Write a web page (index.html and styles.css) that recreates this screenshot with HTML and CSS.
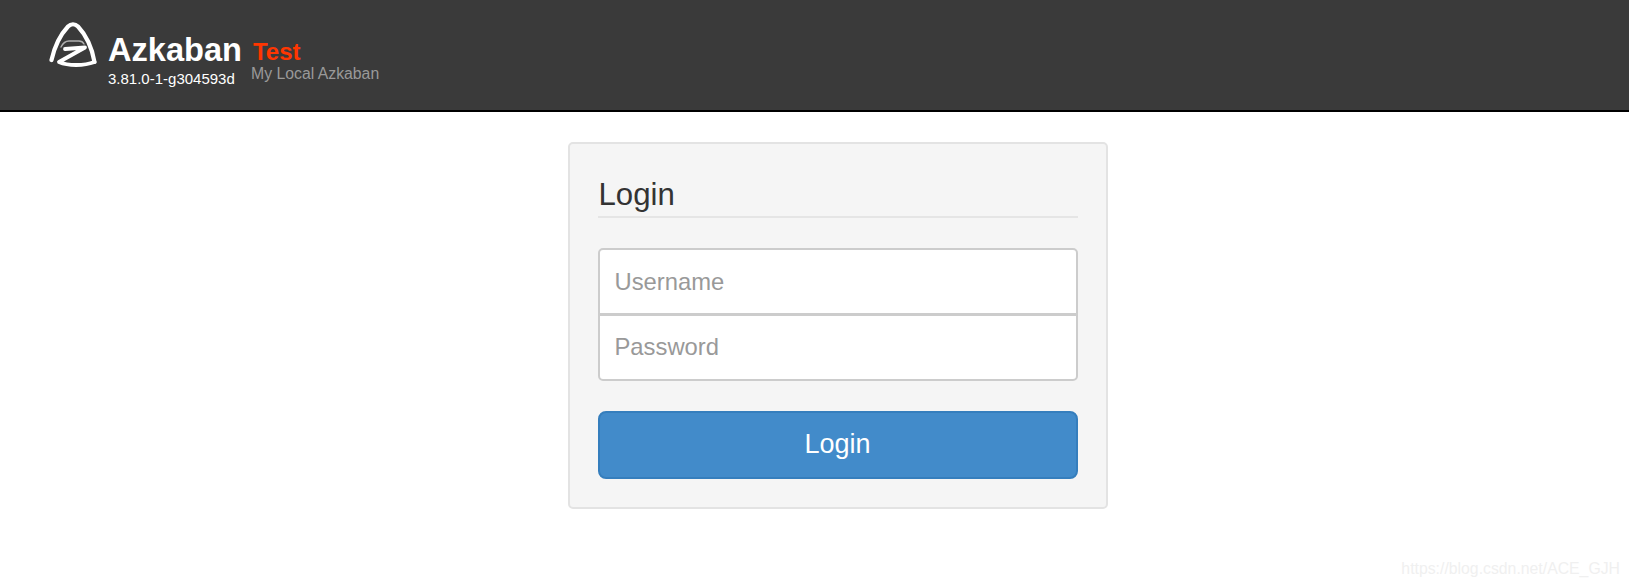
FILE: index.html
```html
<!DOCTYPE html>
<html lang="en">
<head>
<meta charset="utf-8">
<title>Azkaban Login</title>
<link rel="stylesheet" href="styles.css">
</head>
<body>
<header class="navbar">
  <svg class="logo" viewBox="0 0 50 48" width="50" height="48" aria-hidden="true">
    <g fill="none" stroke="#fff" stroke-linecap="round" stroke-linejoin="round">
      <path class="logo-outer" d="M3.5 40 C6 29 12 15 20 6.5 C23 3.5 27 3.5 30 6.5 C38 15 44 28 46.5 42"/>
      <path class="logo-in" d="M13 27 C15 23 17 21 21 21 L31 21 C33 21 35 22 36 24"/>
      <path class="logo-z" d="M17 29 L37 27.5 L11 42 C20 46 36 46 46.5 42"/>
    </g>
  </svg>
  <div class="brand">
    <div class="brand-name">Azkaban</div>
    <div class="brand-version">3.81.0-1-g304593d</div>
  </div>
  <div class="env">
    <div class="env-name">Test</div>
    <div class="env-desc">My Local Azkaban</div>
  </div>
</header>
<main class="content">
  <form class="panel">
    <h3 class="panel-title">Login</h3>
    <div class="fields">
      <input class="field field-top" type="text" placeholder="Username">
      <input class="field field-bottom" type="password" placeholder="Password">
    </div>
    <button class="submit" type="button">Login</button>
  </form>
</main>
<div class="watermark">https://blog.csdn.net/ACE_GJH</div>
</body>
</html>
```
FILE: styles.css
```css
* { box-sizing: border-box; }
html, body { margin: 0; height: 100%; }
body {
  position: relative;
  height: 587px;
  overflow: hidden;
  background: #fff;
  color: #333;
  font-family: "Liberation Sans", Arial, sans-serif;
}
.navbar {
  display: flex;
  align-items: flex-start;
  height: 112px;
  padding: 20px 0 0 48px;
  background: #3a3a3a;
  border-bottom: 2px solid #000;
}
.logo { flex: none; margin-right: 10px; filter: blur(0.5px); }
.logo-outer { stroke-width: 4.2; }
.logo-in { stroke-width: 1.4; opacity: 0.6; }
.logo-z { stroke-width: 3.8; }
.brand { margin-right: 9px; }
.brand-name {
  margin-top: 14px;
  color: #fff;
  font-size: 32.6px;
  line-height: 32px;
  font-weight: 700;
}
.brand-version {
  margin-top: 4px;
  color: #fff;
  font-size: 15px;
  line-height: 17px;
}
.env-name {
  margin: 20px 0 0 2px;
  color: #ff3601;
  font-size: 24px;
  line-height: 24px;
  font-weight: 700;
}
.env-desc {
  margin-top: 1px;
  color: #999;
  font-size: 15.8px;
  line-height: 18px;
}
.content {
  display: flex;
  justify-content: center;
  padding: 30px 0 0 46px;
}
.panel {
  width: 540px;
  height: 367px;
  padding: 28px 28px;
  background: #f5f5f5;
  border: 2px solid #e3e3e3;
  border-radius: 5px;
}
.panel-title {
  margin: 0 0 30px;
  padding: 3px 0 3px 1px;
  height: 46px;
  color: #333;
  font-size: 31.2px;
  line-height: 40px;
  font-weight: 400;
  border-bottom: 2px solid #e5e5e5;
}
.fields { display: flex; flex-direction: column; }
.field {
  display: block;
  width: 100%;
  padding: 0 15px;
  background: #fff;
  color: #555;
  border: 2px solid #ccc;
  font-family: inherit;
  font-size: 23.8px;
  outline: none;
}
.field::placeholder { color: #999; opacity: 1; }
.field-top { height: 67px; border-radius: 5px 5px 0 0; }
.field-bottom { margin-top: -1px; height: 67px; padding-bottom: 2px; border-radius: 0 0 5px 5px; }
.submit {
  display: block;
  width: 100%;
  height: 68px;
  margin-top: 30px;
  padding-bottom: 2px;
  background: #428bca;
  color: #fff;
  border: 2px solid #357ebd;
  border-radius: 8px;
  font-family: inherit;
  font-size: 27px;
}
.watermark {
  position: absolute;
  right: 9px;
  bottom: 8px;
  color: #f0f0f0;
  font-size: 15.8px;
  line-height: 20px;
}
```
